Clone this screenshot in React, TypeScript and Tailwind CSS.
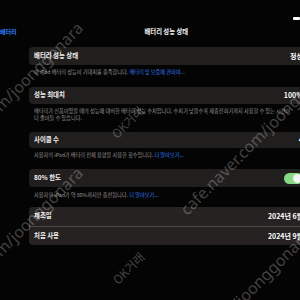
export default function App() {
  const card = "flex items-center justify-between rounded-[4px] bg-[#211e1e] pl-[5px] pr-[7px]";
  const label = "text-[6.4px] font-semibold leading-none text-[#f3f1f1]";
  const value = "text-[7px] font-semibold leading-none text-white";
  const note = "px-[5px] text-[5.2px] leading-[7px] text-[#9b9797] whitespace-nowrap";
  const link = "text-[#2f7cf6]";
  return (
    <div className="relative h-[300px] w-[300px] overflow-hidden bg-[#050404] font-['Noto_Sans_CJK_KR','Noto_Sans',sans-serif]">
      <div className="flex h-[25px] justify-end pt-[17px]">
        <div className="h-[3px] w-[7px] rounded-[1px] bg-white" />
      </div>
      <div className="flex h-[14px] items-center">
        <span className="text-[6px] font-semibold leading-none text-[#2d7ff9]">배터리</span>
        <span className="ml-[128px] text-[6.3px] font-bold leading-none text-[#f4f2f2]">배터리 성능 상태</span>
      </div>
      <div className="ml-[29px] flex w-[281px] flex-col">
        <div className={`${card} mt-[8px] h-[18px]`}>
          <span className={label}>배터리 성능 상태</span>
          <span className={value}>정상</span>
        </div>
        <p className={`${note} mt-[2.5px]`}>
          이 iPad 배터리 성능이 기대치를 충족합니다. <span className={link}>배터리 및 보증에 관하여...</span>
        </p>
        <div className={`${card} mt-[12.5px] h-[17px]`}>
          <span className={label}>성능 최대치</span>
          <span className={value}>100%</span>
        </div>
        <p className={`${note} mt-[2.5px]`}>
          배터리가 신품이었을 때의 성능에 대비한 배터리 성능 수치입니다. 수치가 낮을수록 재충전하기까지 사용할 수 있는 시간이
          <br />더 줄어들 수 있습니다.
        </p>
        <div className={`${card} mt-[11.5px] h-[16px]`}>
          <span className={label}>사이클 수</span>
          <span className={value}>4</span>
        </div>
        <p className={`${note} mt-[2.5px]`}>
          사용자의 iPad가 배터리 전체 용량을 사용한 횟수입니다. <span className={link}>더 알아보기...</span>
        </p>
        <div className={`${card} mt-[11.5px] h-[18px]`}>
          <span className={label}>80% 한도</span>
          <div className="flex h-[11px] w-[19px] items-center justify-end rounded-full bg-[#86d987] pr-[1px]">
            <div className="h-[9px] w-[9px] rounded-full bg-[#f2f2f2]" />
          </div>
        </div>
        <p className={`${note} mt-[3.5px]`}>
          사용자의 iPad가 약 80%까지만 충전됩니다. <span className={link}>더 알아보기...</span>
        </p>
        <div className="mt-[9.5px] flex flex-col rounded-[4px] bg-[#262222]">
          <div className="flex h-[19px] items-center justify-between pl-[5px] pr-[7px]">
            <span className={label}>제조일</span>
            <span className={value}>2024년 6월</span>
          </div>
          <div className="h-px bg-[#4d4848]" />
          <div className="flex h-[18px] items-center justify-between pl-[5px] pr-[7px]">
            <span className={label}>처음 사용</span>
            <span className={value}>2024년 9월</span>
          </div>
        </div>
      </div>

      <span className="pointer-events-none absolute right-[220px] top-[15px] origin-right -rotate-45 whitespace-nowrap font-['Noto_Sans',sans-serif] text-[16px] leading-[20px] text-white/25">cafe.naver.com/joonggonara</span>
      <span className="pointer-events-none absolute right-[220px] top-[160px] origin-right -rotate-45 whitespace-nowrap font-['Noto_Sans',sans-serif] text-[16px] leading-[20px] text-white/25">cafe.naver.com/joonggonara</span>
      <span className="pointer-events-none absolute left-[108px] top-[112px] origin-center -rotate-45 whitespace-nowrap text-[12px] leading-[20px] text-white/25">OK거래</span>
      <span className="pointer-events-none absolute left-[109px] top-[258px] origin-center -rotate-45 whitespace-nowrap text-[12px] leading-[20px] text-white/25">OK거래</span>
      <span className="pointer-events-none absolute left-[183px] top-[202px] origin-left -rotate-45 whitespace-nowrap font-['Noto_Sans',sans-serif] text-[16px] leading-[20px] text-white/25">cafe.naver.com/joonggonara</span>
      <span className="pointer-events-none absolute left-[155px] top-[375px] origin-left -rotate-45 whitespace-nowrap font-['Noto_Sans',sans-serif] text-[16px] leading-[20px] text-white/25">cafe.naver.com/joonggonara</span>
    </div>
  );
}
